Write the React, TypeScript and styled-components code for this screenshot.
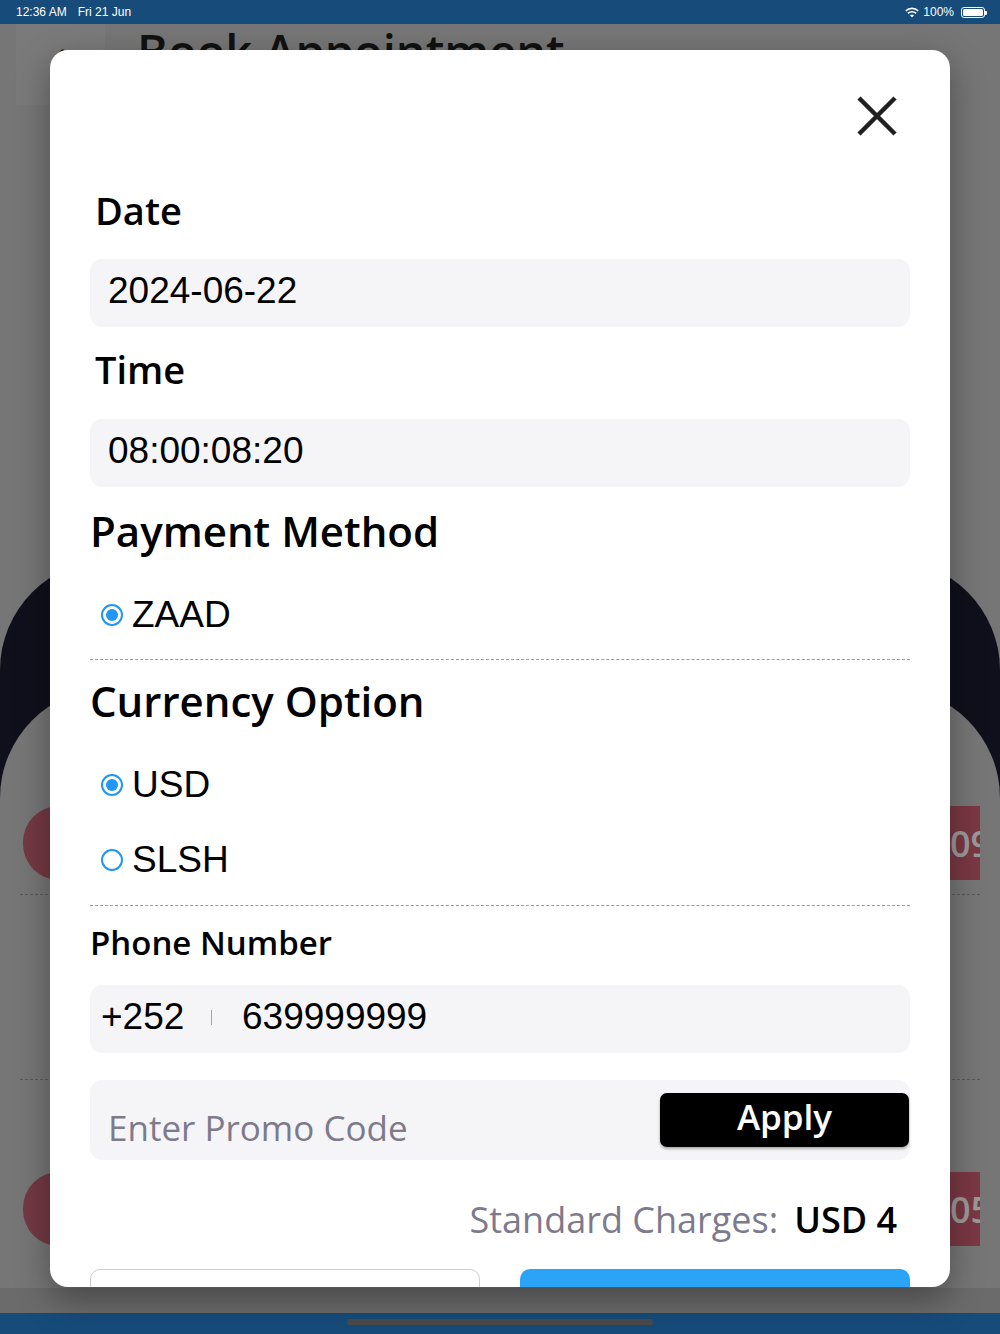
import styled, { createGlobalStyle } from "styled-components";

const GlobalStyle = createGlobalStyle`
  html, body {
    margin: 0;
    padding: 0;
    background: #767676;
  }
  * {
    box-sizing: border-box;
  }
`;

const HEADING = `"Open Sans", "Noto Sans", sans-serif`;
const BODY = `"Liberation Sans", Arial, sans-serif`;

// ---------- dimmed page behind the sheet ----------

const Screen = styled.div`
  position: relative;
  width: 1000px;
  height: 1334px;
  overflow: hidden;
  background: #767676;
  display: flex;
  flex-direction: column;
`;

const StatusBar = styled.div`
  height: 24px;
  flex-shrink: 0;
  background: #164b7a;
  color: #ffffff;
  font-family: ${BODY};
  font-size: 12px;
  display: flex;
  align-items: center;
  justify-content: space-between;
  padding: 0 15px 0 16px;
`;

const StatusLeft = styled.div`
  display: flex;
  gap: 11px;
`;

const StatusRight = styled.div`
  display: flex;
  align-items: center;
  gap: 4px;
`;

const Battery = styled.div`
  position: relative;
  width: 24px;
  height: 11px;
  border: 1px solid #ffffff;
  border-radius: 3px;
  padding: 1px;
  margin-left: 3px;

  &::before {
    content: "";
    display: block;
    width: 100%;
    height: 100%;
    background: #ffffff;
    border-radius: 1.5px;
  }

  &::after {
    content: "";
    position: absolute;
    right: -3px;
    top: 3px;
    width: 2px;
    height: 4px;
    background: #ffffff;
    border-radius: 0 1px 1px 0;
  }
`;

const PageHeader = styled.div`
  height: 82px;
  flex-shrink: 0;
  display: flex;
  align-items: flex-start;
  padding-left: 16px;
  gap: 32px;
`;

const BackBox = styled.div`
  width: 89px;
  height: 81px;
  background: #7a7a7a;
  display: flex;
  align-items: flex-start;
  justify-content: center;
  padding-top: 12px;
  color: #111;
  font-family: ${BODY};
  font-size: 30px;
`;

const PageTitle = styled.div`
  font-family: ${HEADING};
  font-weight: 600;
  font-size: 47px;
  line-height: 54px;
  color: #111111;
`;

const DarkHero = styled.div`
  margin-top: 454px;
  flex: 1;
  background: #10101c;
  border-radius: 110px 110px 0 0;
  padding-top: 128px;
  display: flex;
  flex-direction: column;
`;

const GreyCard = styled.div`
  flex: 1;
  background: #767676;
  border-radius: 110px 110px 0 0;
  padding: 118px 20px 0;
  display: flex;
  flex-direction: column;
`;

const SlotRow = styled.div`
  display: flex;
  justify-content: space-between;
  align-items: center;
  padding: 0 0 0 3px;
`;

const SlotPill = styled.div`
  width: 160px;
  height: 74px;
  border-radius: 36px;
  background: #733944;
`;

const SlotTime = styled.div`
  width: 160px;
  height: 74px;
  background: #7a3844;
  color: #9a9a9a;
  font-family: ${HEADING};
  font-weight: 600;
  font-size: 36px;
  display: flex;
  align-items: center;
  padding-left: 130px;
  overflow: hidden;
  white-space: nowrap;
`;

const PageDivider = styled.div<{ $gap: number }>`
  border-top: 1.5px dashed #5a5a5a;
  margin: 14px 0 ${(p) => p.$gap}px;
`;

const TabBand = styled.div`
  position: absolute;
  left: 0;
  right: 0;
  bottom: 20px;
  height: 26px;
  background: #6b6b6b;
`;

const HomeBar = styled.div`
  position: absolute;
  left: 0;
  right: 0;
  bottom: 0;
  height: 21px;
  background: #164b7a;
  display: flex;
  justify-content: center;
  padding-top: 6px;

  &::after {
    content: "";
    width: 306px;
    height: 6px;
    border-radius: 3px;
    background: #4a4a4a;
  }
`;

// ---------- the booking sheet ----------

const Sheet = styled.div`
  position: absolute;
  top: 50px;
  left: 50px;
  width: 900px;
  height: 1237px;
  background: #ffffff;
  border-radius: 18px;
  box-shadow: 0 12px 34px rgba(0, 0, 0, 0.35);
  overflow: hidden;
  padding: 0 40px;
`;

const CloseRow = styled.div`
  height: 136px;
  display: flex;
  justify-content: flex-end;
  align-items: flex-start;
  padding-top: 45px;
  padding-right: 12px;
`;

const CloseButton = styled.button`
  border: none;
  background: none;
  padding: 0;
  width: 42px;
  height: 42px;
  cursor: pointer;
`;

const Label = styled.div<{ $size: number; $gap: number; $indent?: number }>`
  font-family: ${HEADING};
  font-weight: 600;
  font-size: ${(p) => p.$size}px;
  line-height: ${(p) => Math.round(p.$size * 1.26)}px;
  color: #000000;
  padding-left: ${(p) => p.$indent ?? 0}px;
  margin-bottom: ${(p) => p.$gap}px;
`;

const Field = styled.div<{ $gap: number; $pad?: number }>`
  height: 68px;
  border-radius: 12px;
  background: #f5f5f7;
  display: flex;
  align-items: center;
  padding-left: ${(p) => p.$pad ?? 18}px;
  padding-bottom: 4px;
  font-family: ${BODY};
  font-size: 37px;
  color: #000000;
  margin-bottom: ${(p) => p.$gap}px;
`;

const RadioRow = styled.label`
  height: 75px;
  display: flex;
  align-items: center;
  gap: 9px;
  padding-left: 11px;
  font-family: ${BODY};
  font-size: 37px;
  color: #000000;
  cursor: pointer;
`;

const RadioDot = styled.span<{ $checked: boolean }>`
  width: 22px;
  height: 22px;
  border-radius: 50%;
  border: 2.5px solid #2196f3;
  display: flex;
  align-items: center;
  justify-content: center;

  &::after {
    content: "";
    width: 12px;
    height: 12px;
    border-radius: 50%;
    background: ${(p) => (p.$checked ? "#2196f3" : "transparent")};
  }
`;

const Divider = styled.hr<{ $top: number; $bottom: number }>`
  border: none;
  border-top: 1.2px dashed #9a9a9a;
  margin: ${(p) => p.$top}px 0 ${(p) => p.$bottom}px;
`;

const Code = styled.span`
  width: 100px;
`;

const Separator = styled.span`
  width: 1px;
  height: 15px;
  background: #a5a5a5;
  margin: 0 30px 0 10px;
`;

const PromoBox = styled.div`
  height: 80px;
  border-radius: 12px;
  background: #f5f5f7;
  display: flex;
  align-items: flex-start;
  justify-content: space-between;
  padding: 13px 1px 0 18px;
  margin-bottom: 38px;
`;

const PromoInput = styled.input`
  flex: 1;
  min-width: 0;
  border: none;
  background: transparent;
  outline: none;
  font-family: ${HEADING};
  font-size: 35px;
  color: #000;
  margin-top: 11px;
  padding: 0;

  &::placeholder {
    color: #7d7a8c;
  }
`;

const ApplyButton = styled.button`
  width: 249px;
  height: 54px;
  border: none;
  border-radius: 7px;
  background: #000000;
  color: #ffffff;
  font-family: ${HEADING};
  font-weight: 600;
  font-size: 35px;
  line-height: 40px;
  padding: 0 0 6px;
  box-shadow: 0 2px 3px rgba(0, 0, 0, 0.3);
  cursor: pointer;
`;

const ChargesRow = styled.div`
  display: flex;
  justify-content: flex-end;
  align-items: baseline;
  gap: 16px;
  padding-right: 13px;
  font-family: ${HEADING};
  font-size: 36px;
  line-height: 44px;
  margin-bottom: 27px;
`;

const ChargesLabel = styled.span`
  color: #7d7a8c;
  font-weight: 500;
`;

const ChargesValue = styled.span`
  color: #000000;
  font-weight: 600;
`;

const ActionRow = styled.div`
  display: grid;
  grid-template-columns: 1fr 1fr;
  gap: 40px;
`;

const ActionButton = styled.button<{ $primary?: boolean }>`
  height: 84px;
  border-radius: 10px;
  border: ${(p) => (p.$primary ? "none" : "1.5px solid #cfcfcf")};
  background: ${(p) => (p.$primary ? "#2ba4f8" : "#ffffff")};
  color: ${(p) => (p.$primary ? "#ffffff" : "#000000")};
  font-family: ${HEADING};
  font-size: 28px;
`;

const WifiIcon = () => (
  <svg width="14" height="11" viewBox="0 0 14 11">
    <path d="M7 10.5 L5 8.3 A3 3 0 0 1 9 8.3 Z" fill="#fff" />
    <path d="M2.9 6.3 A6 6 0 0 1 11.1 6.3" stroke="#fff" strokeWidth="1.6" fill="none" />
    <path d="M0.8 3.9 A9 9 0 0 1 13.2 3.9" stroke="#fff" strokeWidth="1.6" fill="none" />
  </svg>
);

const CloseIcon = () => (
  <svg width="42" height="42" viewBox="0 0 42 42">
    <path d="M3 3 L39 39 M39 3 L3 39" stroke="#1f1f1f" strokeWidth="4.5" strokeLinecap="butt" />
  </svg>
);

const currencies = [
  { code: "USD", checked: true },
  { code: "SLSH", checked: false },
];

const App = () => {
  return (
    <Screen>
      <GlobalStyle />
      <StatusBar>
        <StatusLeft>
          <span>12:36 AM</span>
          <span>Fri 21 Jun</span>
        </StatusLeft>
        <StatusRight>
          <WifiIcon />
          <span>100%</span>
          <Battery />
        </StatusRight>
      </StatusBar>

      <PageHeader>
        <BackBox>‹</BackBox>
        <PageTitle>Book Appointment</PageTitle>
      </PageHeader>

      <DarkHero>
        <GreyCard>
          <SlotRow>
            <SlotPill />
            <SlotTime>09:00</SlotTime>
          </SlotRow>
          <PageDivider $gap={170} />
          <PageDivider $gap={92} />
          <SlotRow>
            <SlotPill />
            <SlotTime>05:00</SlotTime>
          </SlotRow>
        </GreyCard>
      </DarkHero>

      <TabBand />
      <HomeBar />

      <Sheet>
        <CloseRow>
          <CloseButton aria-label="Close">
            <CloseIcon />
          </CloseButton>
        </CloseRow>

        <Label $size={38} $gap={25} $indent={5}>
          Date
        </Label>
        <Field $gap={18}>2024-06-22</Field>

        <Label $size={38} $gap={26} $indent={5}>
          Time
        </Label>
        <Field $gap={17}>08:00:08:20</Field>

        <Label $size={42} $gap={20}>
          Payment Method
        </Label>
        <RadioRow>
          <RadioDot $checked />
          ZAAD
        </RadioRow>
        <Divider $top={7} $bottom={14} />

        <Label $size={42} $gap={20}>
          Currency Option
        </Label>
        {currencies.map((c) => (
          <RadioRow key={c.code}>
            <RadioDot $checked={c.checked} />
            {c.code}
          </RadioRow>
        ))}
        <Divider $top={8} $bottom={16} />

        <Label $size={33} $gap={21}>
          Phone Number
        </Label>
        <Field $gap={27} $pad={11}>
          <Code>+252</Code>
          <Separator />
          639999999
        </Field>

        <PromoBox>
          <PromoInput placeholder="Enter Promo Code" />
          <ApplyButton>Apply</ApplyButton>
        </PromoBox>

        <ChargesRow>
          <ChargesLabel>Standard Charges:</ChargesLabel>
          <ChargesValue>USD 4</ChargesValue>
        </ChargesRow>

        <ActionRow>
          <ActionButton>Cancel</ActionButton>
          <ActionButton $primary>Book</ActionButton>
        </ActionRow>
      </Sheet>
    </Screen>
  );
};

export default App;
